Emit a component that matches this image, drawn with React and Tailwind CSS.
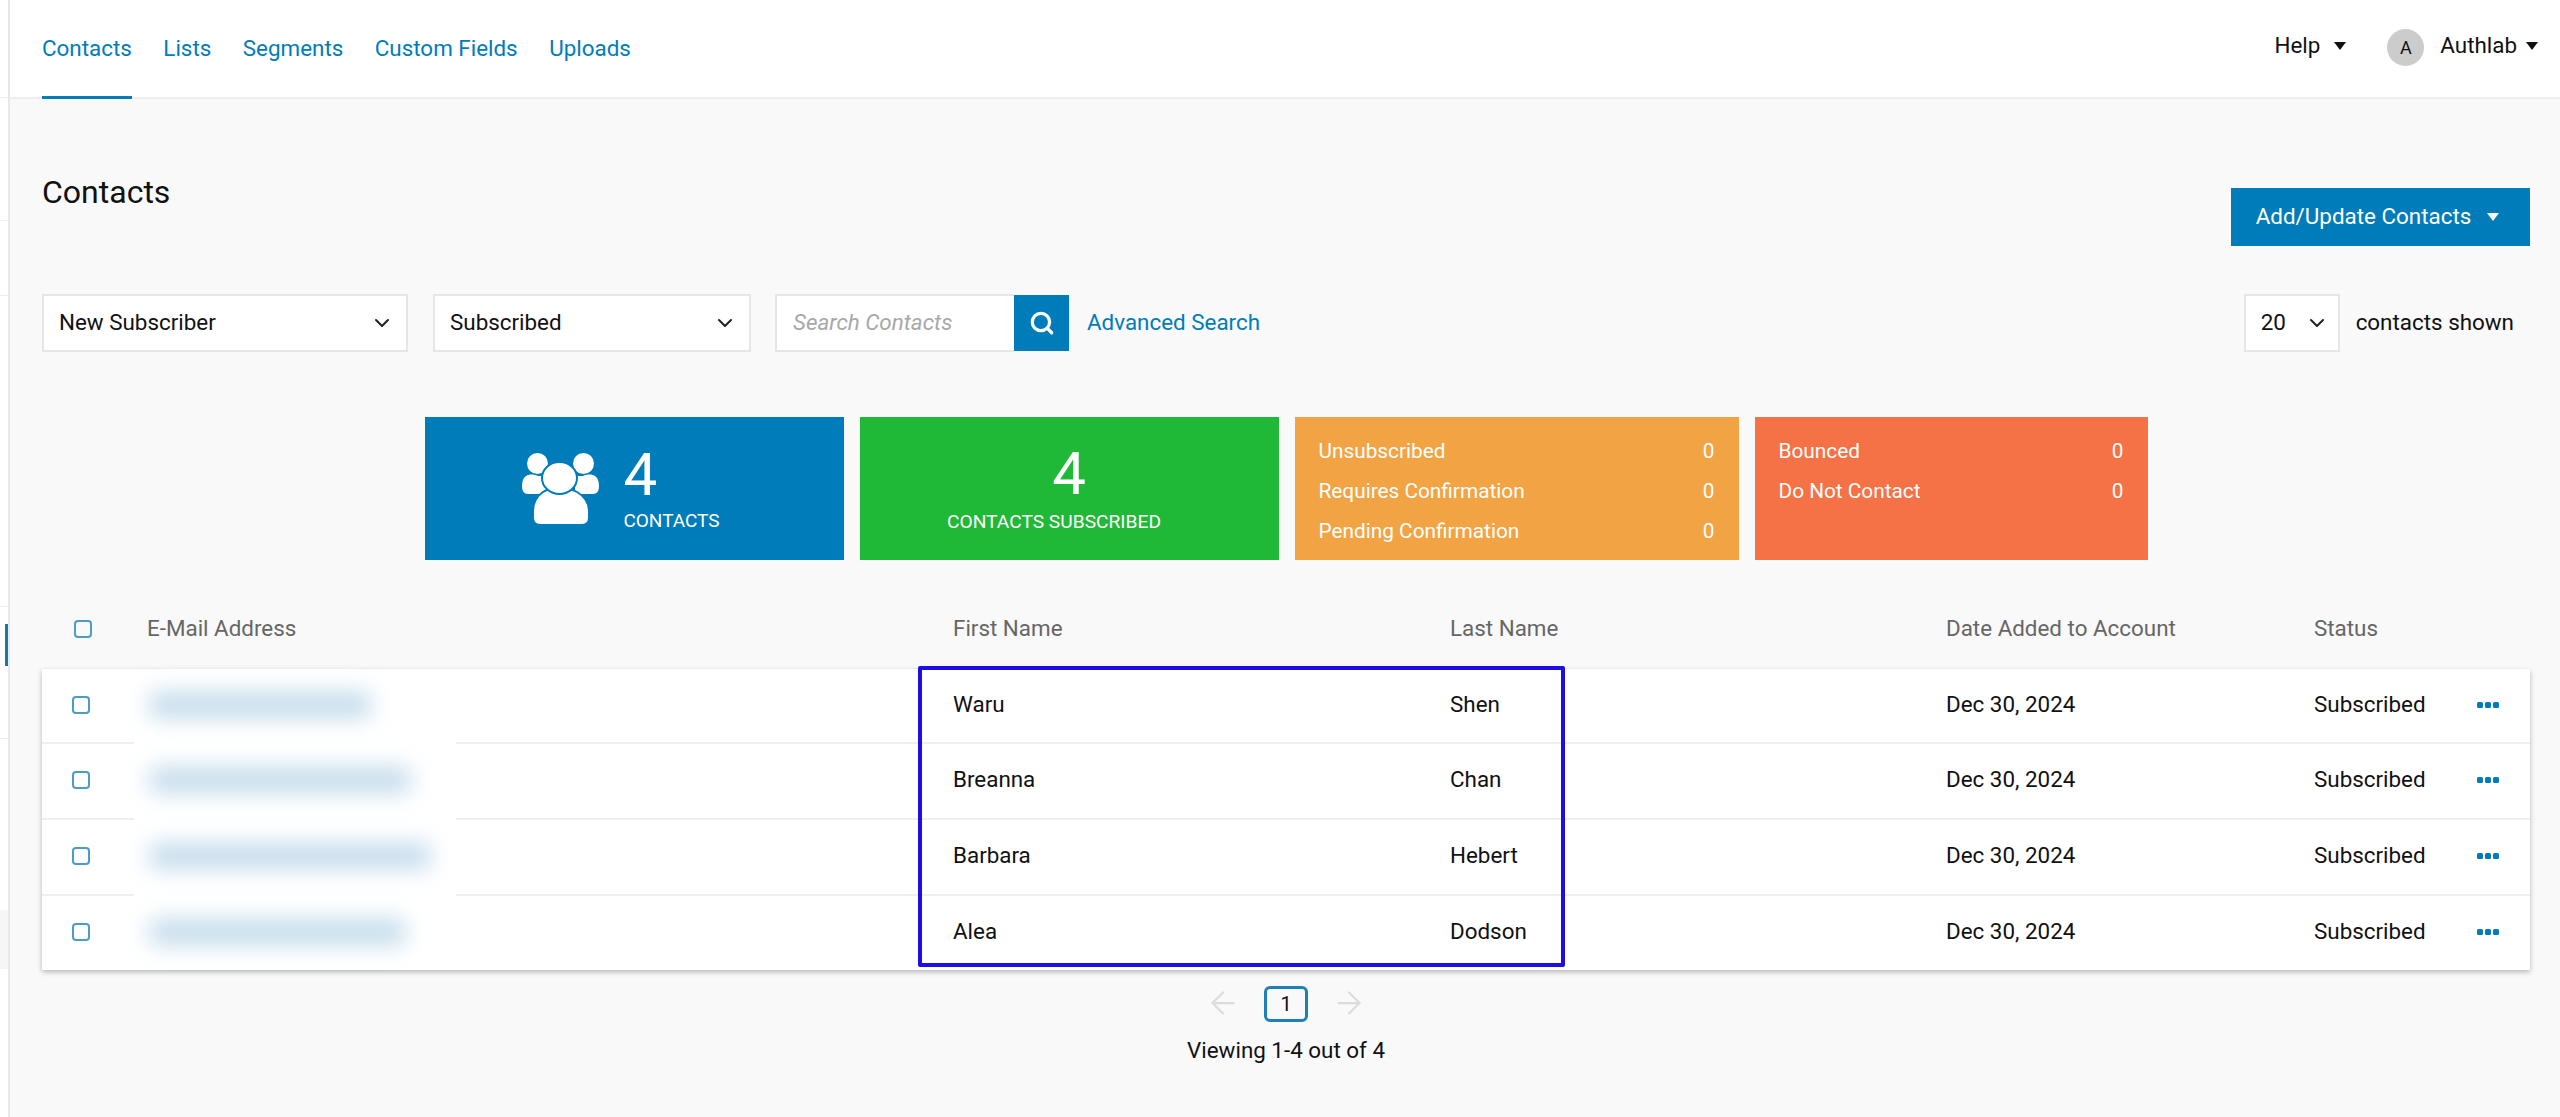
import { ChevronDown, ArrowLeft, ArrowRight, Search } from "lucide-react";

const rows = [
  { first: "Waru", last: "Shen", blur: "w-[220px]", h: "h-[73px]" },
  { first: "Breanna", last: "Chan", blur: "w-[260px]", h: "h-[76px]" },
  { first: "Barbara", last: "Hebert", blur: "w-[280px]", h: "h-[76px]" },
  { first: "Alea", last: "Dodson", blur: "w-[255px]", h: "h-[76px]" },
];

const tabs = ["Contacts", "Lists", "Segments", "Custom Fields", "Uploads"];

function Caret({ className = "" }) {
  return (
    <svg viewBox="0 0 12 8" className={`w-[12px] h-[8px] ${className}`} fill="currentColor">
      <path d="M0 0h12L6 8z" />
    </svg>
  );
}

function Checkbox({ className = "" }) {
  return <span className={`block w-[18px] h-[18px] rounded-[4px] border-2 border-[#4c9cc4] bg-transparent ${className}`} />;
}

function SelectBox({ label, className = "" }) {
  return (
    <div className={`h-[58px] bg-white border-2 border-[#e6e6e6] flex items-center justify-between pl-[15px] pr-[12px] ${className}`}>
      <span>{label}</span>
      <ChevronDown className="w-[24px] h-[24px] text-[#222]" strokeWidth={2} />
    </div>
  );
}

function PeopleIcon() {
  return (
    <svg viewBox="0 0 77 72" className="w-[77px] h-[72px]">
      <circle cx="15.5" cy="10.5" r="10.5" fill="#fff" />
      <circle cx="61.5" cy="10.5" r="10.5" fill="#fff" />
      <path d="M4 23c3-2 8-2 12 0h8v18H6c-4 0-6-3-6-8 0-4 1-8 4-10z" fill="#fff" />
      <path d="M73 23c-3-2-8-2-12 0h-8v18h18c4 0 6-3 6-8 0-4-1-8-4-10z" fill="#fff" />
      <path d="M21 39c3-2 8-4 16.500-4s14 2 17.500 4c7 4 12 10 12 20v6c0 5-3 7-8 7H19c-5 0-8-2-8-7v-6c0-10 4-16 10-20z" fill="#fff" stroke="#017cba" strokeWidth="2" />
      <ellipse cx="37.500" cy="25" rx="17.500" ry="16" fill="#fff" stroke="#017cba" strokeWidth="2" />
    </svg>
  );
}

function StatRow({ label, value }) {
  return (
    <div className="flex items-center justify-between h-[40px]">
      <span>{label}</span>
      <span>{value}</span>
    </div>
  );
}

export default function App() {
  return (
    <div className="w-[2560px] h-[1117px] overflow-hidden flex bg-[#f9f9f9] text-[22.4px] text-[#111] font-['Roboto',sans-serif]">
      {/* strip of the app sidebar, cut off on the left */}
      <div className="w-[10px] shrink-0 bg-white border-r-2 border-[#e8e8e8] flex flex-col">
        <div className="h-[98px] border-b border-[#ececec]" />
        <div className="h-[123px] border-b border-[#f0f0f0]" />
        <div className="h-[75px] border-b border-[#ececec]" />
        <div className="h-[311px] border-b border-[#f0f0f0]" />
        <div className="h-[17px]" />
        <div className="h-[42px] w-[3px] ml-auto bg-[#1879a8]" />
        <div className="h-[73px] border-b border-[#ececec]" />
        <div className="h-[171px]" />
        <div className="h-[59px] bg-[#f7f5f5]" />
      </div>

      <div className="flex-1 min-w-0">
        <header className="h-[99px] bg-white border-b-2 border-[#eeeeee] flex justify-between pl-[32px] pr-[22px]">
          <nav className="flex gap-[31.5px]">
            {tabs.map((tab, i) => (
              <a key={tab} className={`h-[99px] pt-[33px] leading-[30px] text-[#017cba] ${i === 0 ? "border-b-[3px] border-[#017cba]" : ""}`}>
                {tab}
              </a>
            ))}
          </nav>
          <div className="flex items-center h-[91px] text-[#111]">
            <span>Help</span>
            <Caret className="ml-[14px] mr-[41px]" />
            <span className="w-[37px] h-[37px] rounded-full bg-[#cccccc] flex items-center justify-center text-[18px] mt-[4px]">A</span>
            <span className="ml-[16px]">Authlab</span>
            <Caret className="ml-[9px]" />
          </div>
        </header>

        <main className="pl-[32px] pr-[30px] pt-[73px]">
          <div className="flex justify-between items-start">
            <h1 className="text-[32px] leading-[40px] font-normal">Contacts</h1>
            <button className="mt-[16px] w-[299px] h-[58px] bg-[#017cba] text-white flex items-center justify-center gap-[16px] pr-[6px]">
              Add/Update Contacts
              <Caret />
            </button>
          </div>

          <div className="mt-[48px] flex items-center">
            <SelectBox label="New Subscriber" className="w-[366px]" />
            <SelectBox label="Subscribed" className="w-[318px] ml-[25px]" />
            <div className="ml-[24px] w-[239px] h-[58px] bg-white border-2 border-[#e6e6e6] border-r-0 flex items-center pl-[16px] italic text-[#a8a8a8]">
              Search Contacts
            </div>
            <button className="w-[55px] h-[56px] bg-[#017cba] flex items-center justify-center">
              <Search className="w-[26px] h-[26px] text-white" strokeWidth={3} />
            </button>
            <a className="ml-[18px] text-[#017cba]">Advanced Search</a>
            <SelectBox label="20" className="w-[96px] ml-auto !pr-[9px]" />
            <span className="ml-[16px] mr-[16px]">contacts shown</span>
          </div>

          <div className="mt-[65px] flex justify-center gap-[16px] h-[143px] text-white">
            <div className="w-[419px] bg-[#017cba] flex items-center justify-center gap-[24px] pr-[26px]">
              <PeopleIcon />
              <div>
                <div className="text-[60px] leading-[60px]">4</div>
                <div className="text-[19px] leading-[24px] mt-[4px]">CONTACTS</div>
              </div>
            </div>
            <div className="w-[419px] bg-[#1fb937] flex flex-col items-center justify-center">
              <div className="text-[60px] leading-[60px]">4</div>
              <div className="text-[19.2px] leading-[24px] mt-[6px] mr-[30px]">CONTACTS SUBSCRIBED</div>
            </div>
            <div className="w-[444px] bg-[#f2a445] px-[24px] py-[15px] text-[20.8px]">
              <StatRow label="Unsubscribed" value="0" />
              <StatRow label="Requires Confirmation" value="0" />
              <StatRow label="Pending Confirmation" value="0" />
            </div>
            <div className="w-[393px] bg-[#f57146] px-[24px] py-[15px] text-[20.8px]">
              <StatRow label="Bounced" value="0" />
              <StatRow label="Do Not Contact" value="0" />
            </div>
          </div>

          <div className="mt-[52px] h-[34px] grid grid-cols-[105px_806px_497px_496px_368px_163px_53px] items-center text-[#666]">
            <div className="pl-[32px]"><Checkbox /></div>
            <div>E-Mail Address</div>
            <div>First Name</div>
            <div>Last Name</div>
            <div>Date Added to Account</div>
            <div>Status</div>
          </div>

          <div className="relative mt-[23px] bg-white shadow-[0_2px_5px_rgba(0,0,0,0.28)]">
            {rows.map((row, i) => (
              <div
                key={row.first}
                className={`${row.h} pb-[2px] grid grid-cols-[105px_806px_497px_496px_368px_163px_53px] items-center ${i > 0 ? "border-t-2 border-[#eeeeee]" : ""}`}
              >
                <div className="pl-[30px]"><Checkbox /></div>
                <div className="relative self-stretch flex items-center">
                  {i > 0 && <div className="absolute -left-[13px] -top-[2px] w-[322px] h-[4px] bg-white" />}
                  <div className={`${row.blur} h-[26px] ml-[3px] bg-[#c4dcec] blur-[11px] rounded`} />
                </div>
                <div>{row.first}</div>
                <div>{row.last}</div>
                <div>Dec 30, 2024</div>
                <div>Subscribed</div>
                <div className="flex gap-[2px]">
                  <span className="w-[6px] h-[6px] rounded-[1.500px] bg-[#017cba]" />
                  <span className="w-[6px] h-[6px] rounded-[1.500px] bg-[#017cba]" />
                  <span className="w-[6px] h-[6px] rounded-[1.500px] bg-[#017cba]" />
                </div>
              </div>
            ))}
            {/* highlight box from the screenshot annotation */}
            <div className="absolute left-[876px] -top-[3px] w-[647px] h-[301px] border-[4px] border-[#1c0fe6] rounded-[2px]" />
          </div>

          <div className="mt-[16px] flex items-center justify-center h-[36px]">
            <ArrowLeft className="w-[36px] h-[36px] text-[#dcdcdc] -mt-[2px]" strokeWidth={1.5} />
            <span className="mx-[23px] w-[44px] h-[36px] border-[3px] border-[#1e80b4] rounded-[6px] flex items-center justify-center text-[20px]">1</span>
            <ArrowRight className="w-[36px] h-[36px] text-[#dcdcdc] -mt-[2px]" strokeWidth={1.5} />
          </div>
          <div className="mt-[13px] text-center leading-[30px]">Viewing 1-4 out of 4</div>
        </main>
      </div>
    </div>
  );
}
